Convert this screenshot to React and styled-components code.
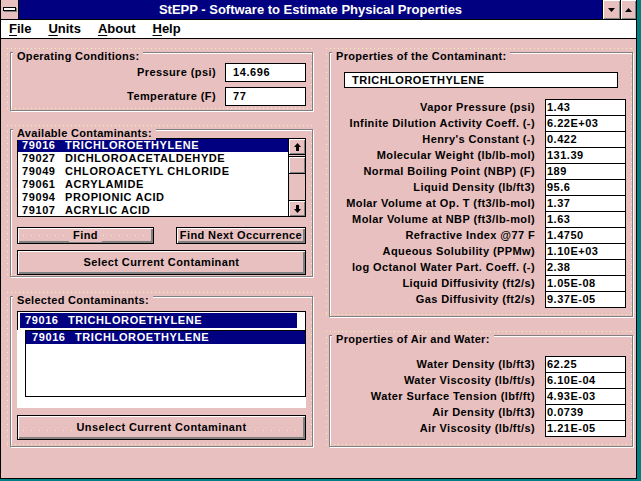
import React from 'react';
import styled, { createGlobalStyle } from 'styled-components';

const PINK = '#e8c0c0';
const NAVY = '#000080';
const GRAY = '#808080';
const DOT = '#f4f0b4';
const FONT = '"Liberation Sans", Arial, Helvetica, sans-serif';

const Global = createGlobalStyle`
  html, body { margin: 0; padding: 0; background: #008080; }
  body { width: 641px; height: 481px; overflow: hidden; font-family: ${FONT}; }
  * { box-sizing: border-box; }
`;

const Window = styled.div`
  width: 637px;
  height: 479px;
  border-left: 1px solid #000;
  border-right: 1px solid #000;
  border-bottom: 1px solid #000;
  background: ${PINK};
  display: flex;
  flex-direction: column;
`;

const TitleBar = styled.div`
  display: flex;
  height: 20px;
  border-bottom: 1px solid #000;
  flex-shrink: 0;
`;

const SysBox = styled.div`
  width: 18px;
  border-right: 1px solid #000;
  background: ${PINK};
  display: flex;
  align-items: center;
  justify-content: center;
`;

const SysBar = styled.div`
  width: 13px;
  height: 4px;
  border: 1px solid #000;
  background: #fff;
  box-shadow: 1px 1px 0 ${GRAY};
  margin-top: -1px;
`;

const TitleText = styled.div`
  flex: 1;
  background: ${NAVY};
  color: #fff;
  font: bold 13px/19px ${FONT};
  text-align: center;
  white-space: nowrap;
`;

const TitleButton = styled.div`
  width: ${p => p.$w}px;
  border-left: 1px solid #000;
  background: ${PINK};
  box-shadow: inset 1px 1px 0 #fff, inset -1px -1px 0 ${GRAY};
  display: flex;
  align-items: center;
  justify-content: center;
`;

const MenuBar = styled.div`
  display: flex;
  align-items: center;
  height: 19px;
  background: #fff;
  border-bottom: 1px solid #000;
  padding-left: 0;
  gap: 1px;
  flex-shrink: 0;
`;

const MenuItem = styled.span`
  padding: 0 8px;
  font: bold 13px/18px ${FONT};
  color: #000;
  & u { text-decoration-thickness: 1px; text-underline-offset: 2px; }
`;

const Client = styled.div`
  flex: 1;
  display: flex;
  gap: 16px;
  padding: 13px 0 0 9px;
`;

const Column = styled.div`
  width: ${p => p.$w}px;
  display: flex;
  flex-direction: column;
`;

const Group = styled.div`
  position: relative;
  z-index: 0;
  height: ${p => p.$h}px;
  margin-top: ${p => p.$mt || 0}px;
  border: 1px solid ${GRAY};
  box-shadow: inset 1px 1px 0 #fff, 1px 1px 0 #fff;
  padding: ${p => p.$pad};
  display: flex;
  flex-direction: column;
  &::before {
    content: '';
    position: absolute;
    z-index: -1;
    left: -4px;
    top: -5px;
    right: 0;
    bottom: 1px;
    pointer-events: none;
    background:
      repeating-linear-gradient(to right, ${DOT} 0 1px, transparent 1px 4px) left top / 100% 1px no-repeat,
      repeating-linear-gradient(to right, ${DOT} 0 1px, transparent 1px 4px) left bottom / 100% 1px no-repeat,
      repeating-linear-gradient(to bottom, ${DOT} 0 1px, transparent 1px 6px) left top / 1px 100% no-repeat,
      repeating-linear-gradient(to bottom, ${DOT} 0 1px, transparent 1px 6px) right top / 1px 100% no-repeat;
  }
`;

const Legend = styled.div`
  position: absolute;
  top: -3px;
  left: 2px;
  z-index: 2;
  padding: 0 4px 0 4px;
  background: ${PINK};
  font: bold 11px/13px ${FONT};
  letter-spacing: 0.3px;
  color: #000;
  white-space: nowrap;
`;

const FieldRow = styled.div`
  display: flex;
  justify-content: flex-end;
  align-items: center;
  gap: 9px;
  & + & { margin-top: 5px; }
`;

const Label = styled.span`
  font: bold 11px/17px ${FONT};
  letter-spacing: 0.4px;
  color: #000;
  white-space: nowrap;
`;

const Input = styled.div`
  width: 81px;
  height: 19px;
  border: 1px solid #000;
  background: #fff;
  padding-left: 7px;
  font: bold 11px/17px ${FONT};
  letter-spacing: 0.6px;
  color: #000;
`;

const ListBox = styled.div`
  display: flex;
  width: 289px;
  height: ${p => p.$h}px;
  border: 1px solid #000;
  background: #fff;
  flex-shrink: 0;
`;

const ListItems = styled.div`
  flex: 1;
  overflow: hidden;
`;

const ListRow = styled.div`
  height: 13px;
  padding-left: ${p => p.$pl || 4}px;
  font: bold 11px/13px ${FONT};
  letter-spacing: 0.6px;
  white-space: nowrap;
  color: ${p => (p.$sel ? '#fff' : '#000')};
  background: ${p => (p.$sel ? NAVY : 'transparent')};
`;

const Code = styled.span`
  display: inline-block;
  width: 43px;
`;

const ScrollBar = styled.div`
  width: 17px;
  border-left: 1px solid #000;
  background: ${PINK};
  display: flex;
  flex-direction: column;
`;

const ScrollBtn = styled.div`
  height: 16px;
  flex-shrink: 0;
  background: ${PINK};
  border-top: ${p => (p.$down ? '1px solid #000' : 'none')};
  border-bottom: ${p => (p.$down ? 'none' : '1px solid #000')};
  box-shadow: inset 1px 1px 0 #fff, inset -1px -1px 0 ${GRAY};
  display: flex;
  align-items: center;
  justify-content: center;
`;

const Thumb = styled.div`
  height: 18px;
  margin-top: 1px;
  flex-shrink: 0;
  background: ${PINK};
  border-top: 1px solid #000;
  border-bottom: 1px solid #000;
  box-shadow: inset 1px 1px 0 #fff, inset -1px -1px 0 ${GRAY};
`;

const Track = styled.div`
  flex: 1;
`;

const ButtonRow = styled.div`
  display: flex;
  justify-content: space-between;
  width: 289px;
  margin-top: ${p => p.$mt}px;
`;

const Button = styled.div`
  position: relative;
  width: ${p => p.$w}px;
  height: ${p => p.$h}px;
  margin-top: ${p => p.$mt || 0}px;
  flex-shrink: 0;
  border: 1px solid #000;
  background: ${PINK};
  box-shadow: inset 1px 1px 0 #fff, inset -2px -2px 0 ${GRAY};
  display: flex;
  align-items: center;
  justify-content: center;
  font: bold 11px/13px ${FONT};
  letter-spacing: 0.4px;
  color: #000;
  white-space: nowrap;
  &::before {
    content: ${p => (p.$dots != null ? "''" : 'none')};
    position: absolute;
    left: 5px;
    right: 5px;
    top: ${p => p.$dots}px;
    height: 1px;
    background: repeating-linear-gradient(to right, ${DOT} 0 1px, transparent 1px 8px);
  }
`;

const ButtonText = styled.span`
  position: relative;
  z-index: 1;
  background: ${PINK};
  padding: 0 4px;
  margin-top: -1px;
`;

const SelArea = styled.div`
  width: 289px;
  height: 97px;
  background: #fff;
  display: flex;
  flex-direction: column;
  flex-shrink: 0;
`;

const ComboEdit = styled.div`
  height: 19px;
  border: 1px solid #000;
  border-bottom: none;
  padding: 1px 8px 0 2px;
`;

const ComboHighlight = styled.div`
  height: 15px;
  background: ${NAVY};
  color: #fff;
  padding-left: 5px;
  font: bold 11px/15px ${FONT};
  letter-spacing: 0.6px;
  white-space: nowrap;
`;

const DropList = styled.div`
  margin-left: 8px;
  height: 67px;
  border: 1px solid #000;
  background: #fff;
`;

const NameField = styled.div`
  width: 274px;
  height: 16px;
  margin-left: 14px;
  margin-bottom: 11px;
  border: 1px solid #000;
  background: #fff;
  padding-left: 7px;
  font: bold 11px/14px ${FONT};
  letter-spacing: 0.5px;
  color: #000;
`;

const PropList = styled.div`
  display: flex;
  flex-direction: column;
`;

const PropRow = styled.div`
  display: flex;
  justify-content: flex-end;
  align-items: flex-start;
  height: 16px;
  gap: 10px;
`;

const ValueBox = styled.div`
  width: 81px;
  height: 17px;
  flex-shrink: 0;
  border: 1px solid #000;
  background: #fff;
  padding-left: 1px;
  font: bold 11px/15px ${FONT};
  letter-spacing: 0.5px;
  color: #000;
`;

const Tri = ({ up }) => (
  <svg width="7" height="4" viewBox="0 0 7 4">
    <polygon points={up ? '3.5,0 7,4 0,4' : '0,0 7,0 3.5,4'} fill="#000" />
  </svg>
);

const Arrow = ({ up }) => (
  <svg width="7" height="8" viewBox="0 0 7 8">
    {up ? (
      <path d="M3.5 0 L7 4 L5 4 L5 8 L2 8 L2 4 L0 4 Z" fill="#000" />
    ) : (
      <path d="M2 0 L5 0 L5 4 L7 4 L3.5 8 L0 4 L2 4 Z" fill="#000" />
    )}
  </svg>
);

const available = [
  ['79016', 'TRICHLOROETHYLENE'],
  ['79027', 'DICHLOROACETALDEHYDE'],
  ['79049', 'CHLOROACETYL CHLORIDE'],
  ['79061', 'ACRYLAMIDE'],
  ['79094', 'PROPIONIC ACID'],
  ['79107', 'ACRYLIC ACID'],
];

const contaminantProps = [
  ['Vapor Pressure (psi)', '1.43'],
  ['Infinite Dilution Activity Coeff. (-)', '6.22E+03'],
  ["Henry's Constant (-)", '0.422'],
  ['Molecular Weight (lb/lb-mol)', '131.39'],
  ['Normal Boiling Point (NBP) (F)', '189'],
  ['Liquid Density (lb/ft3)', '95.6'],
  ['Molar Volume at Op. T (ft3/lb-mol)', '1.37'],
  ['Molar Volume at NBP (ft3/lb-mol)', '1.63'],
  ['Refractive Index @77 F', '1.4750'],
  ['Aqueous Solubility (PPMw)', '1.10E+03'],
  ['log Octanol Water Part. Coeff. (-)', '2.38'],
  ['Liquid Diffusivity (ft2/s)', '1.05E-08'],
  ['Gas Diffusivity (ft2/s)', '9.37E-05'],
];

const airWater = [
  ['Water Density (lb/ft3)', '62.25'],
  ['Water Viscosity (lb/ft/s)', '6.10E-04'],
  ['Water Surface Tension (lbf/ft)', '4.93E-03'],
  ['Air Density (lb/ft3)', '0.0739'],
  ['Air Viscosity (lb/ft/s)', '1.21E-05'],
];

export default function App() {
  return (
    <>
      <Global />
      <Window>
        <TitleBar>
          <SysBox>
            <SysBar />
          </SysBox>
          <TitleText>StEPP - Software to Estimate Physical Properties</TitleText>
          <TitleButton $w={18}>
            <Tri />
          </TitleButton>
          <TitleButton $w={16}>
            <Tri up />
          </TitleButton>
        </TitleBar>
        <MenuBar>
          <MenuItem><u>F</u>ile</MenuItem>
          <MenuItem><u>U</u>nits</MenuItem>
          <MenuItem><u>A</u>bout</MenuItem>
          <MenuItem><u>H</u>elp</MenuItem>
        </MenuBar>
        <Client>
          <Column $w={303}>
            <Group $h={59} $pad="10px 6px 0 0">
              <Legend>Operating Conditions:</Legend>
              <FieldRow>
                <Label>Pressure (psi)</Label>
                <Input>14.696</Input>
              </FieldRow>
              <FieldRow>
                <Label>Temperature (F)</Label>
                <Input>77</Input>
              </FieldRow>
            </Group>

            <Group $h={148} $mt={18} $pad="8px 0 0 6px">
              <Legend>Available Contaminants:</Legend>
              <ListBox $h={79}>
                <ListItems>
                  {available.map(([c, n], i) => (
                    <ListRow key={c} $sel={i === 0}>
                      <Code>{c}</Code>
                      {n}
                    </ListRow>
                  ))}
                </ListItems>
                <ScrollBar>
                  <ScrollBtn>
                    <Arrow up />
                  </ScrollBtn>
                  <Thumb />
                  <Track />
                  <ScrollBtn $down>
                    <Arrow />
                  </ScrollBtn>
                </ScrollBar>
              </ListBox>
              <ButtonRow $mt={10}>
                <Button $w={137} $h={17} $dots={7}>
                  <ButtonText>Find</ButtonText>
                </Button>
                <Button $w={130} $h={17}>
                  Find Next Occurrence
                </Button>
              </ButtonRow>
              <Button $w={289} $h={25} $mt={6}>
                Select Current Contaminant
              </Button>
            </Group>

            <Group $h={151} $mt={19} $pad="14px 0 0 6px">
              <Legend>Selected Contaminants:</Legend>
              <SelArea>
                <ComboEdit>
                  <ComboHighlight>
                    <Code>79016</Code>TRICHLOROETHYLENE
                  </ComboHighlight>
                </ComboEdit>
                <DropList>
                  <ListRow $sel $pl={6}>
                    <Code>79016</Code>TRICHLOROETHYLENE
                  </ListRow>
                </DropList>
              </SelArea>
              <Button $w={289} $h={25} $mt={7} $dots={14}>
                <ButtonText>Unselect Current Contaminant</ButtonText>
              </Button>
            </Group>
          </Column>

          <Column $w={304}>
            <Group $h={265} $pad="19px 6px 0 0">
              <Legend>Properties of the Contaminant:</Legend>
              <NameField>TRICHLOROETHYLENE</NameField>
              <PropList>
                {contaminantProps.map(([l, v]) => (
                  <PropRow key={l}>
                    <Label>{l}</Label>
                    <ValueBox>{v}</ValueBox>
                  </PropRow>
                ))}
              </PropList>
            </Group>

            <Group $h={112} $mt={18} $pad="20px 6px 0 0">
              <Legend>Properties of Air and Water:</Legend>
              <PropList>
                {airWater.map(([l, v]) => (
                  <PropRow key={l}>
                    <Label>{l}</Label>
                    <ValueBox>{v}</ValueBox>
                  </PropRow>
                ))}
              </PropList>
            </Group>
          </Column>
        </Client>
      </Window>
    </>
  );
}
